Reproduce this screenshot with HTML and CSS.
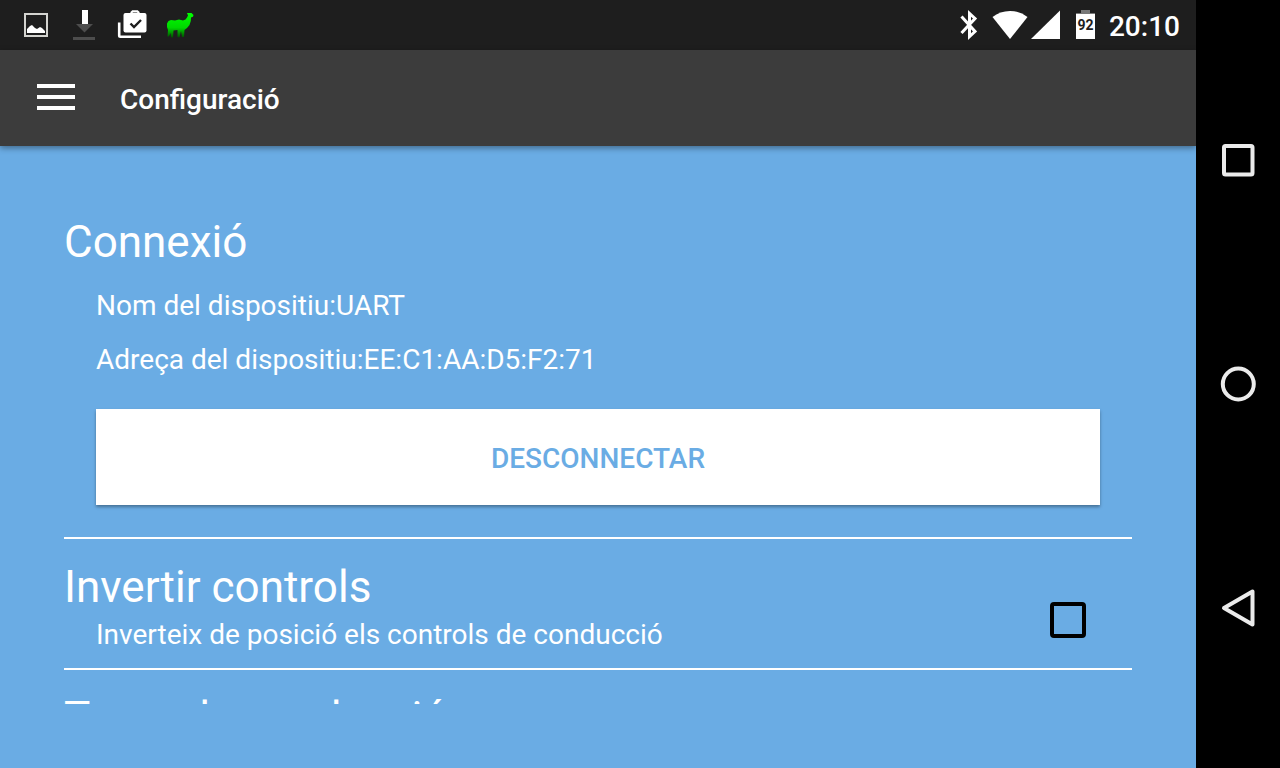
FILE: index.html
```html
<!DOCTYPE html>
<html lang="ca">
<head>
<meta charset="UTF-8">
<meta name="viewport" content="width=device-width, initial-scale=1.0">
<title>Configuració</title>
<link rel="stylesheet" href="styles.css">
</head>
<body>
<div class="screen">
<div class="status-bar">
<div class="notifications">
<svg width="48" height="50" viewBox="0 0 48 50">
    <rect x="13" y="14" width="22" height="22" fill="none" stroke="#d4d4d0" stroke-width="2"/>
    <path d="M15 33v-4l3-3 2-1 3 3 2 1 3-2 2 1 3 3v2z" fill="#fff"/>
</svg>
<svg width="48" height="50" viewBox="0 0 48 50">
    <path d="M16 24h17l-8.500 8.500z" fill="#4d4d4d"/>
    <path d="M22 10h6v14h-6z" fill="#fff"/>
    <path d="M13 37h22v3H13z" fill="#4d4d4d"/>
</svg>
<svg width="48" height="50" viewBox="0 0 48 50">
    <path d="M11.200 22.500V35.500q0 1.200 1.200 1.200H33" fill="none" stroke="#fff" stroke-width="2.600"/>
    <path d="M23.500 14v-1.500l1.200-1.200h4.600l1.200 1.200V14" fill="none" stroke="#fff" stroke-width="2.200"/>
    <rect x="15.500" y="13" width="23" height="19.500" rx="2" fill="#fff"/>
    <path d="M22.500 23.500l3.500 3.500 7-7" fill="none" stroke="#1e1e1e" stroke-width="2.400"/>
</svg>
<svg width="48" height="50" viewBox="0 0 48 50">
    <defs>
        <linearGradient id="llama" x1="0" y1="0" x2="0" y2="1">
            <stop offset="0" stop-color="#0f0"/>
            <stop offset="0.6" stop-color="#00d800"/>
            <stop offset="1" stop-color="#005000"/>
        </linearGradient>
    </defs>
    <path d="M31 13L35.500 13L37.500 15L37 16.800L35 17.500L34.800 21L33.500 25L31 28L28.500 30L28 37L26 37L25 31L23.500 37.500L21.500 37L21.500 30L17.500 30.500L17 37.500L15 37.500L14.500 33L13 36.500L11.500 36.500L12 30L11 27L11 23.500L12.500 21L15 20L19 20.500L23 19.500L27 20.500L29.500 19.500L31 17.500L32 15.500Z" fill="url(#llama)"/>
</svg>
</div>
<div class="indicators">
<svg width="18" height="50" viewBox="0 0 18 50">
    <path d="M1.500 16.500L15 31.500 9.500 36.500V13.500l5.500 5L1.500 33" fill="none" stroke="#fff" stroke-width="3"/>
</svg>
<svg class="wifi" width="36" height="50" viewBox="0 0 36 50">
    <path d="M.5 17Q8 11 18 11T35.500 17L18 39z" fill="#fff"/>
</svg>
<svg class="signal" width="29" height="50" viewBox="0 0 29 50">
    <path d="M29 10.500V39H0z" fill="#fff"/>
</svg>
<svg class="battery" width="19" height="50" viewBox="0 0 19 50">
    <path d="M5 10h9v3h5v2H0v-2h5z" fill="#777"/>
    <path d="M0 14h19v25H0z" fill="#fff"/>
    <text x="9.500" y="30" text-anchor="middle" fill="#1e1e1e">92</text>
</svg>
<span class="clock">20:10</span>
</div>
</div>

<header class="toolbar">
<button class="menu" aria-label="Menú"><span></span><span></span><span></span></button>
<h1>Configuració</h1>
</header>

<main>
<div class="settings">
<section class="connection">
<h2>Connexió</h2>
<p>Nom del dispositiu:UART</p>
<p>Adreça del dispositiu:EE:C1:AA:D5:F2:71</p>
<button class="disconnect">DESCONNECTAR</button>
</section>
<section class="option">
<div>
<h2><label for="invertir">Invertir controls</label></h2>
<p>Inverteix de posició els controls de conducció</p>
</div>
<input type="checkbox" id="invertir">
</section>
<section class="option">
<h2>Tema de conducció</h2>
</section>
</div>
</main>
</div>

<nav class="system-nav">
<button aria-label="Recents">
<svg width="40" height="40" viewBox="0 0 40 40"><rect x="6" y="6" width="28.500" height="28.500" rx="1.500"/></svg>
</button>
<button aria-label="Inici">
<svg width="40" height="40" viewBox="0 0 40 40"><circle cx="20.300" cy="20" r="15.500"/></svg>
</button>
<button aria-label="Enrere">
<svg width="40" height="40" viewBox="0 0 40 40"><path d="M34.500 3.500v33L6 20z"/></svg>
</button>
</nav>
</body>
</html>
```
FILE: styles.css
```css
* { box-sizing: border-box; }
body { margin: 0; display: flex; height: 100vh; overflow: hidden; font-family: Roboto, sans-serif; font-size: 28px; line-height: 33px; color: #fff; background-color: #000; }
h1, h2, p { margin: 0; }
button { padding: 0; border: none; border-radius: 0; font: inherit; color: inherit; background: none; cursor: pointer; }
svg { display: block; }

.screen { flex: 1; min-width: 0; display: flex; flex-direction: column; background-color: #6aace4; }

.status-bar { flex: none; display: flex; justify-content: space-between; height: 50px; padding: 0 16px 0 12px; background-color: #1e1e1e; }
.notifications, .indicators { display: flex; align-items: center; }
.wifi { margin-left: 14px; }
.signal { margin-left: 3px; }
.battery { margin-left: 16px; }
.battery text { font-size: 14px; font-weight: 700; }
.clock { margin-left: 14px; font-weight: 500; padding-top: 2px; }

.toolbar { position: relative; flex: none; display: flex; align-items: center; height: 96px; padding-left: 37px; background-color: #3c3c3c; box-shadow: 0 2px 6px rgba(0, 0, 0, 0.4); }
.toolbar h1 { margin-left: 45px; padding-top: 2px; font-size: 28px; font-weight: 500; }
.menu { display: flex; flex-direction: column; gap: 7px; width: 38px; padding-bottom: 2px; }
.menu span { height: 4px; background-color: #fff; }

main { flex: 1; min-height: 0; padding: 64px; }
.settings { height: 100%; overflow: hidden; }
.settings h2 { font-size: 44px; font-weight: 400; line-height: 52px; }
.settings p { margin-left: 32px; }
.connection { display: flex; flex-direction: column; padding: 6px 0 32px; border-bottom: 2px solid #fff; }
.connection p { margin-top: 21px; }
.disconnect { height: 96px; margin: 33px 32px 0; padding-top: 2px; font-weight: 500; color: #6aace4; background-color: #fff; box-shadow: 0 2px 3px rgba(0, 0, 0, 0.35); }
.option { display: flex; align-items: flex-end; justify-content: space-between; padding: 22px 46px 17px 0; border-bottom: 2px solid #fff; }
.option p { margin-top: 5px; }
.option input { appearance: none; width: 36px; height: 36px; margin: 0 0 13px; border: 4px solid #000; border-radius: 4px; }

.system-nav { flex: none; display: flex; flex-direction: column; justify-content: space-around; align-items: center; width: 84px; padding: 48px 0; background-color: #000; }
.system-nav svg { fill: none; stroke: #ebebeb; stroke-width: 4; stroke-linejoin: round; }
```
